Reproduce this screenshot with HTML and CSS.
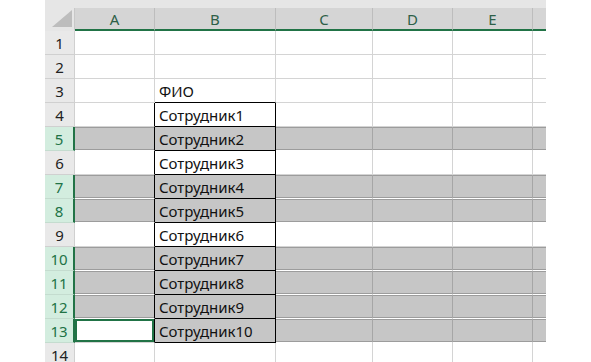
FILE: index.html
```html
<!DOCTYPE html>
<html>
<head>
<meta charset="utf-8">
<link rel="stylesheet" href="styles.css">
</head>
<body>
<div class="sheet">
  <div class="topband"></div>
  <div class="row head">
    <div class="cell rh corner"><svg class="tri" width="20" height="17" viewBox="0 0 20 17"><polygon points="20,0 20,17 0,17" fill="#bdbdbd"/></svg></div>
    <div class="cell a">A</div>
    <div class="cell b">B</div>
    <div class="cell c">C</div>
    <div class="cell d">D</div>
    <div class="cell e">E</div>
    <div class="cell f"></div>
  </div>
  <div class="row"><div class="cell rh">1</div><div class="cell a"></div><div class="cell b"></div><div class="cell c"></div><div class="cell d"></div><div class="cell e"></div><div class="cell f"></div></div>
  <div class="row"><div class="cell rh">2</div><div class="cell a"></div><div class="cell b"></div><div class="cell c"></div><div class="cell d"></div><div class="cell e"></div><div class="cell f"></div></div>
  <div class="row r3"><div class="cell rh">3</div><div class="cell a"></div><div class="cell b">ФИО</div><div class="cell c"></div><div class="cell d"></div><div class="cell e"></div><div class="cell f"></div></div>
  <div class="row boxed"><div class="cell rh">4</div><div class="cell a"></div><div class="cell b">Сотрудник1</div><div class="cell c"></div><div class="cell d"></div><div class="cell e"></div><div class="cell f"></div></div>
  <div class="row boxed sel"><div class="cell rh">5</div><div class="cell a"></div><div class="cell b">Сотрудник2</div><div class="cell c"></div><div class="cell d"></div><div class="cell e"></div><div class="cell f"></div></div>
  <div class="row boxed"><div class="cell rh">6</div><div class="cell a"></div><div class="cell b">Сотрудник3</div><div class="cell c"></div><div class="cell d"></div><div class="cell e"></div><div class="cell f"></div></div>
  <div class="row boxed sel"><div class="cell rh">7</div><div class="cell a"></div><div class="cell b">Сотрудник4</div><div class="cell c"></div><div class="cell d"></div><div class="cell e"></div><div class="cell f"></div></div>
  <div class="row boxed sel"><div class="cell rh">8</div><div class="cell a"></div><div class="cell b">Сотрудник5</div><div class="cell c"></div><div class="cell d"></div><div class="cell e"></div><div class="cell f"></div></div>
  <div class="row boxed"><div class="cell rh">9</div><div class="cell a"></div><div class="cell b">Сотрудник6</div><div class="cell c"></div><div class="cell d"></div><div class="cell e"></div><div class="cell f"></div></div>
  <div class="row boxed sel"><div class="cell rh">10</div><div class="cell a"></div><div class="cell b">Сотрудник7</div><div class="cell c"></div><div class="cell d"></div><div class="cell e"></div><div class="cell f"></div></div>
  <div class="row boxed sel"><div class="cell rh">11</div><div class="cell a"></div><div class="cell b">Сотрудник8</div><div class="cell c"></div><div class="cell d"></div><div class="cell e"></div><div class="cell f"></div></div>
  <div class="row boxed sel"><div class="cell rh">12</div><div class="cell a"></div><div class="cell b">Сотрудник9</div><div class="cell c"></div><div class="cell d"></div><div class="cell e"></div><div class="cell f"></div></div>
  <div class="row boxed sel"><div class="cell rh">13</div><div class="cell a active"></div><div class="cell b">Сотрудник10</div><div class="cell c"></div><div class="cell d"></div><div class="cell e"></div><div class="cell f"></div></div>
  <div class="row"><div class="cell rh">14</div><div class="cell a"></div><div class="cell b"></div><div class="cell c"></div><div class="cell d"></div><div class="cell e"></div><div class="cell f"></div></div>
</div>
</body>
</html>
```

FILE: styles.css
```css
html, body {
  margin: 0;
  padding: 0;
  background: #fff;
  overflow: hidden;
}
.sheet {
  margin-left: 45px;
  width: 501px;
  display: flex;
  flex-direction: column;
  font-family: "Noto Sans", "Open Sans", sans-serif;
  font-size: 15px;
  color: #111;
}
.topband {
  height: 8px;
  background: #e6e6e6;
}
.row {
  display: flex;
  height: 24px;
}
.cell {
  box-sizing: border-box;
  height: 100%;
  border-right: 1px solid #d4d4d4;
  border-bottom: 1px solid #d4d4d4;
  display: flex;
  align-items: center;
  white-space: nowrap;
  overflow: hidden;
}
.rh { width: 30px; justify-content: center; background: #e9e9e9; border-color: #d0d0d0; color: #222; font-size: 15px; }
.a { width: 80px; }
.b { width: 121px; padding-left: 4px; }
.c { width: 97px; }
.d { width: 80px; }
.e { width: 80px; }
.f { width: 13px; border-right: none; }

.head { height: 23px; }
.head .cell {
  background: #d5d5d5;
  border-bottom: 2px solid #217346;
  border-right-color: #bdbdbd;
  justify-content: center;
  color: #2e5f48;
  font-size: 15px;
  padding-left: 0;
}
.head .rh {
  background: #e6e6e6;
  border-bottom: 1px solid #e6e6e6;
  border-right-color: #c8c8c8;
  position: relative;
}
.tri { position: absolute; right: 2px; bottom: 3px; }

.r3 .b { border-bottom-color: #000; }
.boxed .a { border-right-color: #000; }
.boxed .b { border-right-color: #000; border-bottom-color: #000; }

.sel .rh {
  background: #d3eddf;
  color: #217346;
  border-right: 2px solid #217346;
  border-bottom-color: #c4dccf;
}
.sel .a, .sel .b, .sel .c, .sel .d, .sel .e, .sel .f {
  background: #c6c6c6;
  box-shadow: inset 0 1px #9c9c9c, inset 0 -1px #9c9c9c;
  border-bottom-color: #fff;
  border-right-color: #a6a6a6;
}
.sel .f { border-right: none; }
.sel .b {
  box-shadow: none;
  border-bottom-color: #000;
  border-right-color: #000;
}
.sel .a { border-right-color: #000; }
.sel .a.active {
  background: #fff;
  box-shadow: inset 0 0 0 2px #217346;
  border-bottom-color: #d4d4d4;
}
```
